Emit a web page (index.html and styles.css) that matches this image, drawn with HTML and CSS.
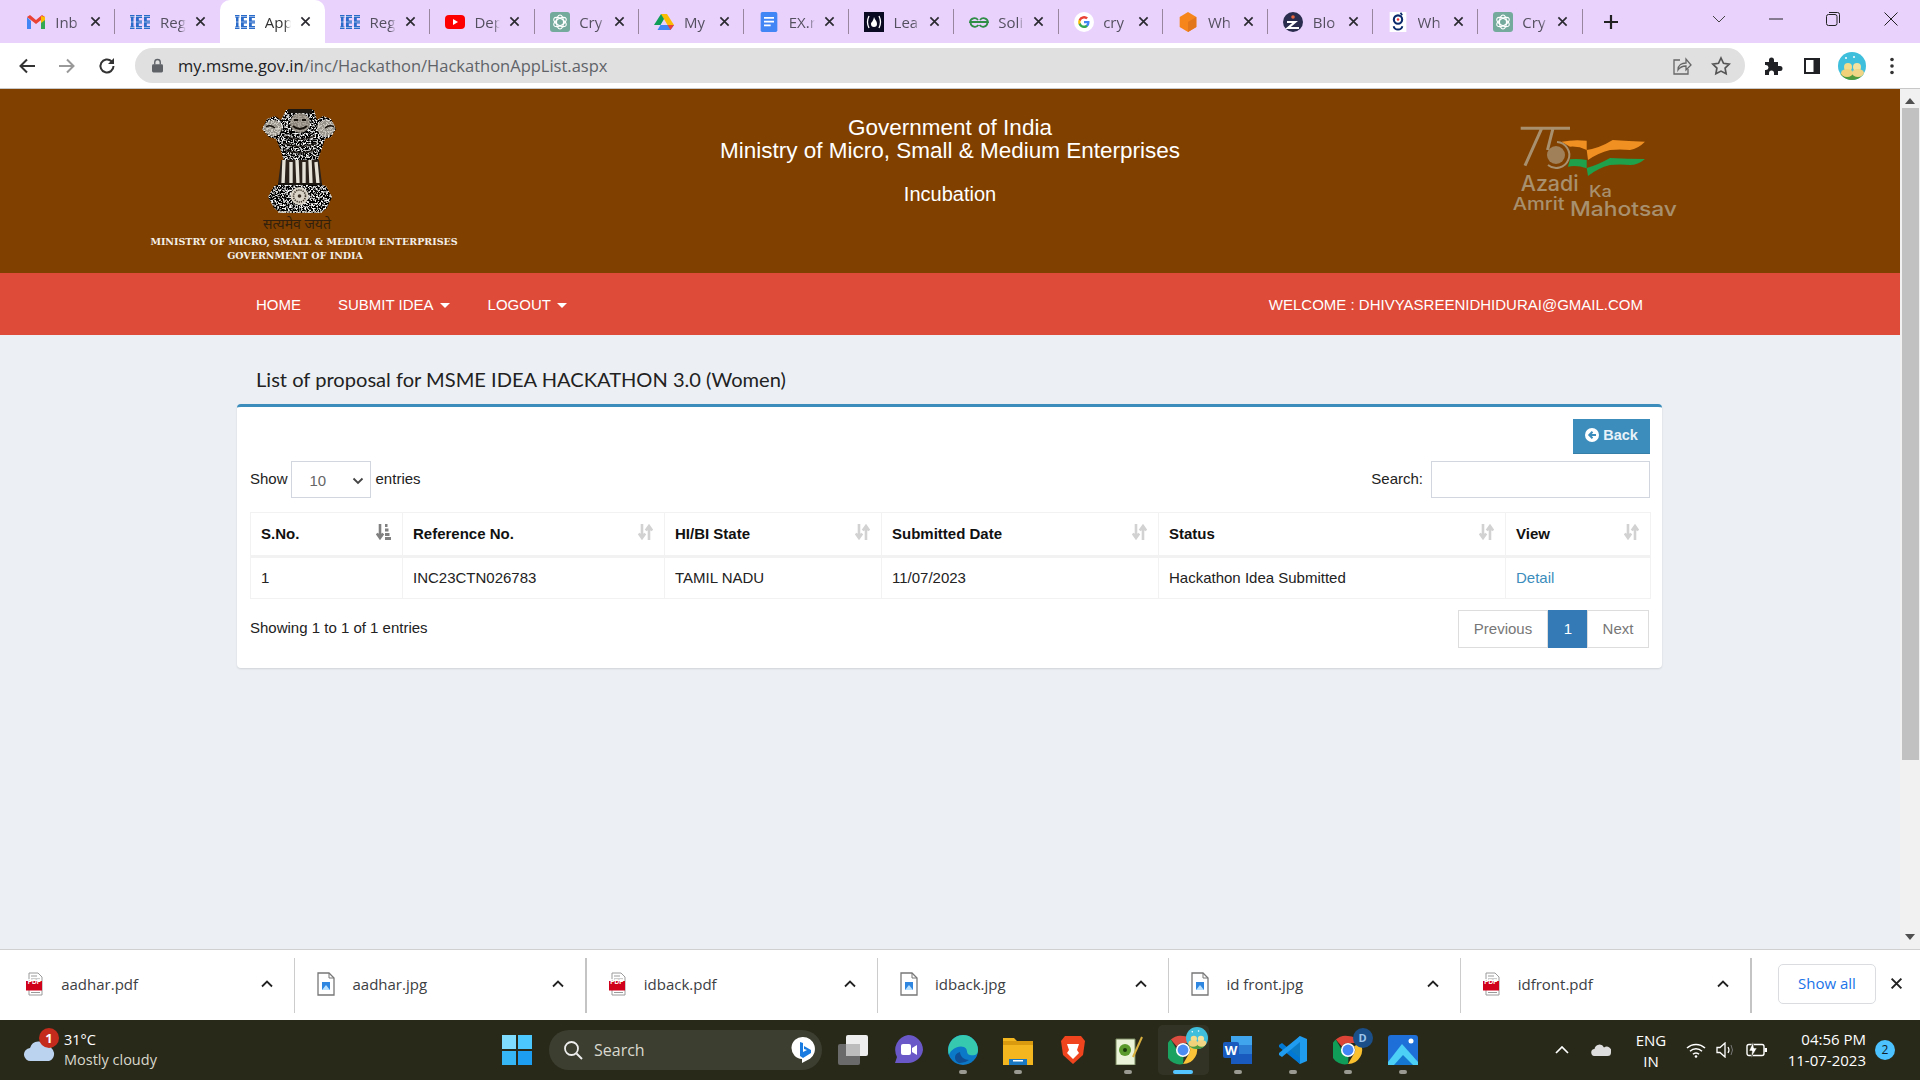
FILE: index.html
```html
<!DOCTYPE html>
<html lang="en">
<head>
<meta charset="utf-8">
<title>MSME Hackathon App List</title>
<link rel="stylesheet" href="styles.css">
</head>
<body>
<svg class="defs" aria-hidden="true">
  <defs>
    <filter id="spk" x="0" y="0" width="1" height="1">
      <feTurbulence type="fractalNoise" baseFrequency=".6" numOctaves="2" seed="7" result="n"/>
      <feColorMatrix in="n" type="matrix" values="5 0 0 0 -2.400 5 0 0 0 -2.400 5 0 0 0 -2.400 0 0 0 0 1" result="g"/>
      <feComposite in="g" in2="SourceAlpha" operator="in"/>
    </filter>
  </defs>
  <symbol id="gmail" viewBox="0 0 20 20"><path d="M1 5v12h4V9z" fill="#4285f4"/><path d="M19 5v12h-4V9z" fill="#34a853"/><path d="M1 5l9 7 9-7-3-2-6 5-6-5-3 2z" fill="#ea4335"/><path d="M15 4l4 1v3l-4 3z" fill="#fbbc04"/></symbol>
  <symbol id="msme" viewBox="0 0 20 20"><g fill="#2a6ac8"><path d="M0 3h4.500v2.500H3.500v9h1V17H0v-2.500h1v-9H0z"/><path d="M6 3h6v3H8.800v2.500H12v3H8.800V14H12v3H6z"/><path d="M14 3h6v3h-3.200v2.500H20v3h-3.200V14H20v3h-6z"/></g><path d="M0 4.500h20M0 10h20M0 15.500h20" stroke="#fff" stroke-width=".5"/></symbol>
  <symbol id="yt" viewBox="0 0 20 20"><rect y="3" width="20" height="14" rx="4" fill="#f00"/><path d="M8 7l5 3-5 3z" fill="#fff"/></symbol>
  <symbol id="gpt" viewBox="0 0 20 20"><rect width="20" height="20" rx="3" fill="#74aa9c"/><g fill="none" stroke="#fff" stroke-width="1.100"><ellipse cx="10" cy="10" rx="3.500" ry="7"/><ellipse cx="10" cy="10" rx="3.500" ry="7" transform="rotate(60 10 10)"/><ellipse cx="10" cy="10" rx="3.500" ry="7" transform="rotate(120 10 10)"/></g></symbol>
  <symbol id="drive" viewBox="0 0 20 20"><path d="M7 2h6l-6.500 11H0z" fill="#0f9d58"/><path d="M7 2h6l7 11h-6.500z" fill="#fbbc04"/><path d="M3.500 18h13L20 13H6.500z" fill="#4285f4"/><path d="M13.500 13H20l-3.500 5z" fill="#ea4335"/></symbol>
  <symbol id="docs" viewBox="0 0 20 24"><rect width="20" height="24" rx="2" fill="#4285f4"/><path d="M4 7h12M4 11.500h12M4 16h8" stroke="#fff" stroke-width="2"/></symbol>
  <symbol id="fcc" viewBox="0 0 20 20"><rect width="20" height="20" fill="#0a0a23"/><path d="M5 4Q2 10 5 16M15 4q3 6 0 12" fill="none" stroke="#fff" stroke-width="1.300"/><path d="M10 5c1 3 3 4 3 7a3 3 0 0 1-6 0c0-2 2-2 3-7z" fill="#fff"/></symbol>
  <symbol id="gfg" viewBox="0 0 20 20"><g fill="none" stroke="#2f8d46" stroke-width="1.800"><path d="M10 10H1a4.500 4.500 0 0 1 8-2M10 10h9a4.500 4.500 0 0 0-8-2"/><path d="M1.500 11a4.500 4.500 0 0 0 8 2M18.500 11a4.500 4.500 0 0 1-8 2"/></g></symbol>
  <symbol id="google" viewBox="0 0 20 20"><circle cx="10" cy="10" r="10" fill="#fff"/><path d="M15.500 10.200c0-.4 0-.8-.1-1.200H10v2.300h3.100a2.700 2.700 0 0 1-1.200 1.700v1.500h1.900c1.100-1 1.700-2.500 1.700-4.300z" fill="#4285f4"/><path d="M10 16c1.600 0 2.900-.5 3.800-1.500L11.900 13a3.500 3.500 0 0 1-5.300-1.900H4.700v1.500A6 6 0 0 0 10 16z" fill="#34a853"/><path d="M6.600 11.100a3.500 3.500 0 0 1 0-2.200V7.400H4.700a6 6 0 0 0 0 5.200z" fill="#fbbc04"/><path d="M10 6.400c.9 0 1.700.3 2.300.9l1.700-1.700A6 6 0 0 0 4.700 7.400l1.900 1.500A3.500 3.500 0 0 1 10 6.400z" fill="#ea4335"/></symbol>
  <symbol id="cube" viewBox="0 0 20 24"><path d="M10 0l10 6v12l-10 6L0 18V6z" fill="#f6851b"/><path d="M10 12l10-6v12l-10 6z" fill="#e2761b"/></symbol>
  <symbol id="bloc" viewBox="0 0 20 20"><circle cx="10" cy="10" r="10" fill="#2b2d4e"/><circle cx="10" cy="5" r="1.800" fill="#e8663d"/><path d="M4 10h8l-7 6h11" fill="none" stroke="#fff" stroke-width="2.200"/></symbol>
  <symbol id="gsq" viewBox="0 0 20 24"><rect width="20" height="24" fill="#fff"/><circle cx="10" cy="9" r="5" fill="none" stroke="#0b2a6b" stroke-width="2.500"/><circle cx="10" cy="9" r="1.500" fill="#e33"/><path d="M5 17a5 4 0 0 0 10 0" fill="none" stroke="#0b2a6b" stroke-width="2.500"/><path d="M13 1l2 3" stroke="#0b2a6b" stroke-width="2"/></symbol>
  <symbol id="x" viewBox="0 0 12 12"><path d="M1.500 1.500l9 9M10.500 1.500l-9 9" stroke="currentColor" stroke-width="1.800" fill="none"/></symbol>
  <symbol id="pdf" viewBox="0 0 18 24"><path d="M3 1h9l4 4v18H3z" fill="#fff" stroke="#9a9a9a"/><path d="M5 4h6M5 7h9M5 20.500h9" stroke="#9a9a9a"/><rect y="9" width="16" height="9.500" fill="#d0021b"/></symbol>
  <symbol id="jpg" viewBox="0 0 18 24"><path d="M1 1h11l5 5v17H1z" fill="#fff" stroke="#777" stroke-width="1.300"/><path d="M12 1v5h5" fill="none" stroke="#777"/><rect x="5" y="10" width="8" height="8" fill="#2f86e0"/><path d="M5 18l4-5 4 5z" fill="#b8e0ff"/></symbol>
  <symbol id="chev" viewBox="0 0 12 8"><path d="M1 6.500l5-5 5 5" fill="none" stroke="currentColor" stroke-width="1.800"/></symbol>
  <symbol id="sort" viewBox="0 0 15 16"><path d="M4 0v13M.8 9.500L4 14l3.200-4.500" fill="none" stroke="currentColor" stroke-width="2.600"/><path d="M11 16V3M7.800 6.500L11 2l3.200 4.500" fill="none" stroke="currentColor" stroke-width="2.600"/></symbol>
  <symbol id="sortd" viewBox="0 0 15 16"><path d="M4 0v13M.8 9.500L4 14l3.200-4.500" fill="none" stroke="currentColor" stroke-width="2.600"/><path d="M9 0h2.500v3H9zM9 4.500h3.500v3H9zM9 9h4.500v3H9zM9 13h6v3H9z" fill="currentColor"/></symbol>
  <symbol id="chrome" viewBox="0 0 32 32"><path d="M16 1a15 15 0 0 1 13 7.500H16a7.500 7.500 0 0 0-6.500 3.700L3 4.900A15 15 0 0 1 16 1z" fill="#db4437"/><path d="M29 8.500A15 15 0 0 1 16 31l6.500-11.200A7.500 7.500 0 0 0 22.500 12z" fill="#fbc02d"/><path d="M3 4.900l6.500 11.200a7.500 7.500 0 0 0 7 7.400L16 31A15 15 0 0 1 3 4.900z" fill="#0f9d58"/><circle cx="16" cy="16" r="7.500" fill="#fff"/><circle cx="16" cy="16" r="5.800" fill="#4285f4"/></symbol>
  <symbol id="chick" viewBox="0 0 28 28"><clipPath id="cc"><circle cx="14" cy="14" r="14"/></clipPath><g clip-path="url(#cc)"><rect width="28" height="28" fill="#3fbfdc"/><rect y="22" width="28" height="6" fill="#4f9a3c"/><circle cx="10" cy="15" r="4" fill="#f3dc8c"/><ellipse cx="9" cy="21" rx="6" ry="4" fill="#f1d27a"/><circle cx="19" cy="15" r="4" fill="#f3e2a0"/><ellipse cx="20" cy="21" rx="6" ry="4" fill="#efd585"/><circle cx="8" cy="6" r="1" fill="#fff"/><circle cx="16" cy="5" r="1" fill="#fff"/></g></symbol>
</svg>

<div class="tabstrip">
  <div class="tab"><svg class="fav"><use href="#gmail"/></svg><span class="tabt">Inb</span><svg class="tabx"><use href="#x"/></svg></div>
  <div class="tab tab-nosep"><svg class="fav"><use href="#msme"/></svg><span class="tabt">Reg</span><svg class="tabx"><use href="#x"/></svg></div>
  <div class="tab tab-active"><svg class="fav"><use href="#msme"/></svg><span class="tabt">App</span><svg class="tabx"><use href="#x"/></svg></div>
  <div class="tab"><svg class="fav"><use href="#msme"/></svg><span class="tabt">Reg</span><svg class="tabx"><use href="#x"/></svg></div>
  <div class="tab"><svg class="fav"><use href="#yt"/></svg><span class="tabt">Dep</span><svg class="tabx"><use href="#x"/></svg></div>
  <div class="tab"><svg class="fav"><use href="#gpt"/></svg><span class="tabt">Cry</span><svg class="tabx"><use href="#x"/></svg></div>
  <div class="tab"><svg class="fav"><use href="#drive"/></svg><span class="tabt">My</span><svg class="tabx"><use href="#x"/></svg></div>
  <div class="tab"><svg class="fav"><use href="#docs"/></svg><span class="tabt">EX.r</span><svg class="tabx"><use href="#x"/></svg></div>
  <div class="tab"><svg class="fav"><use href="#fcc"/></svg><span class="tabt">Lea</span><svg class="tabx"><use href="#x"/></svg></div>
  <div class="tab"><svg class="fav"><use href="#gfg"/></svg><span class="tabt">Soli</span><svg class="tabx"><use href="#x"/></svg></div>
  <div class="tab"><svg class="fav"><use href="#google"/></svg><span class="tabt">cry</span><svg class="tabx"><use href="#x"/></svg></div>
  <div class="tab"><svg class="fav"><use href="#cube"/></svg><span class="tabt">Wh</span><svg class="tabx"><use href="#x"/></svg></div>
  <div class="tab"><svg class="fav"><use href="#bloc"/></svg><span class="tabt">Blo</span><svg class="tabx"><use href="#x"/></svg></div>
  <div class="tab"><svg class="fav"><use href="#gsq"/></svg><span class="tabt">Wh</span><svg class="tabx"><use href="#x"/></svg></div>
  <div class="tab"><svg class="fav"><use href="#gpt"/></svg><span class="tabt">Cry</span><svg class="tabx"><use href="#x"/></svg></div>
  <svg class="newtab" viewBox="0 0 16 16"><path d="M8 1v14M1 8h14" stroke="#222" stroke-width="2.200"/></svg>
  <div class="winctl">
    <svg class="wbtn wdrop" viewBox="0 0 14 8"><path d="M1 1l6 6 6-6" fill="none" stroke="#444" stroke-width="1"/></svg>
    <svg class="wbtn wmin" viewBox="0 0 14 14"><path d="M0 7h14" stroke="#222" stroke-width="1"/></svg>
    <svg class="wbtn wmax" viewBox="0 0 14 14"><rect x=".5" y="2.500" width="10.500" height="11" rx="2" fill="none" stroke="#222"/><path d="M3 .5h8.500a2 2 0 0 1 2 2V11" fill="none" stroke="#222"/></svg>
    <svg class="wbtn wclose" viewBox="0 0 14 14"><path d="M.5.5l13 13M13.500.5l-13 13" stroke="#222" stroke-width="1"/></svg>
  </div>
</div>

<div class="toolbar">
  <svg class="navbtn" viewBox="0 0 18 18"><path d="M17 9H3M9 2.500L2.500 9 9 15.500" fill="none" stroke="#333" stroke-width="2"/></svg>
  <svg class="navbtn navbtn-off" viewBox="0 0 18 18"><path d="M1 9h14M9 2.500L15.500 9 9 15.500" fill="none" stroke="#999" stroke-width="2"/></svg>
  <svg class="navbtn" viewBox="0 0 18 18"><path d="M15.500 9a6.500 6.500 0 1 1-2-4.700" fill="none" stroke="#333" stroke-width="2"/><path d="M16 1v6h-6z" fill="#333"/></svg>
  <div class="omnibox">
    <svg class="lock" viewBox="0 0 12 16"><path d="M3 7V4.500a3 3 0 0 1 6 0V7" fill="none" stroke="#5f6368" stroke-width="1.500"/><rect y="6.500" width="12" height="9" rx="1.500" fill="#5f6368"/></svg>
    <span class="url"><span class="url-host">my.msme.gov.in</span>/inc/Hackathon/HackathonAppList.aspx</span>
    <svg class="omni-share" viewBox="0 0 20 20"><path d="M8 4H2v14h14v-5" fill="none" stroke="#666" stroke-width="1.300"/><path d="M6 14c0-5 4-7 8-7V3l5 6-5 5v-4c-3 0-6 1-8 4z" fill="none" stroke="#666" stroke-width="1.300"/></svg>
    <svg class="omni-star" viewBox="0 0 20 20"><path d="M10 2l2.500 5.300 5.700.8-4.100 4 1 5.700-5.100-2.700-5.100 2.700 1-5.700-4.100-4 5.700-.8z" fill="none" stroke="#555" stroke-width="1.700"/></svg>
  </div>
  <div class="tbright">
    <svg class="tbicon" viewBox="0 0 20 20"><path d="M2 6h4V4a2.500 2.500 0 0 1 5 0v2h4v4h2a2.500 2.500 0 0 1 0 5h-2v4h-4v-2a2.500 2.500 0 0 0-5 0v2H2v-5h1a2.500 2.500 0 0 0 0-5H2z" fill="#202124"/></svg>
    <svg class="tbicon" viewBox="0 0 20 20"><rect x="2" y="2" width="16" height="16" fill="#202124"/><rect x="4" y="4" width="7.500" height="12" fill="#fff"/></svg>
    <svg class="tbavatar"><use href="#chick"/></svg>
    <svg class="tbmenu" viewBox="0 0 4 18"><circle cx="2" cy="2.500" r="1.800" fill="#333"/><circle cx="2" cy="9" r="1.800" fill="#333"/><circle cx="2" cy="15.500" r="1.800" fill="#333"/></svg>
  </div>
</div>

<div class="viewport">
  <div class="page">
    <header class="masthead">
      <div class="mh-left">
        <svg class="emblem" viewBox="0 0 100 115">
          <g filter="url(#spk)" fill="#000">
            <path d="M36 10h28l3 10 6-4 8 3 5 10-5 8-6 2-4 12-5 14H35l-4-14-5-12-7-2-7-8 5-10 8-3 6 4z"/>
            <path d="M24 86q26-9 52 0l6 11-5 11-6 5H30l-6-5-6-11z"/>
          </g>
          <path d="M38 9h24v4H38z" fill="#1d1712"/>
          <ellipse cx="50" cy="23" rx="10" ry="10" fill="#a39c90" opacity=".85"/>
          <path d="M43 26q7 6 14 0" fill="none" stroke="#17110c" stroke-width="2"/>
          <path d="M44 20h4M52 20h4" stroke="#17110c" stroke-width="1.800"/>
          <ellipse cx="23" cy="28" rx="9" ry="8" fill="#c9c4b8" opacity=".75"/>
          <ellipse cx="76" cy="28" rx="9" ry="8" fill="#c9c4b8" opacity=".75"/>
          <path d="M16 27q4-3 9 1M84 27q-4-3-9 1" fill="none" stroke="#17110c" stroke-width="1.500"/>
          <path d="M35 36q15 7 30 0M33 43q17 7 34 0M35 50q15 6 30 0" fill="none" stroke="#1a140f" stroke-width="1.600" opacity=".8"/>
          <path d="M31 60h38l3 24H28z" fill="#2b221b"/>
          <path d="M34 60l-1 24M41 62l0 22M47 60l1 24M54 62l0 22M60 60l1 24M66 62l2 22" stroke="#e6e2d8" stroke-width="3.400"/>
          <path d="M28 84h44" stroke="#1d1712" stroke-width="2"/>
          <circle cx="49.500" cy="96" r="9" fill="#d8d3c6"/>
          <circle cx="49.500" cy="96" r="6" fill="none" stroke="#3a3027" stroke-width="1.600" stroke-dasharray="1.200 1"/>
          <circle cx="49.500" cy="96" r="1.800" fill="#3a3027"/>
          <path d="M28 112h44" stroke="#d8d2c4" stroke-width="1.500" stroke-dasharray="2 1"/>
        </svg>
        <div class="motto">सत्यमेव जयते</div>
        <div class="mh-name">MINISTRY OF MICRO, SMALL &amp; MEDIUM ENTERPRISES</div>
        <div class="mh-name mh-gov">GOVERNMENT OF INDIA</div>
      </div>
      <div class="mh-center">
        <div>Government of India</div>
        <div>Ministry of Micro, Small &amp; Medium Enterprises</div>
        <div class="mh-sub">Incubation</div>
      </div>
      <div class="mh-right">
        <svg class="azadi" viewBox="0 0 190 110">
          <path d="M20.700 8.300H70M41.700 8.300L25 45.700M53 8.300L47.500 30" fill="none" stroke="#a8906e" stroke-width="3"/>
          <path d="M57 22a13 13 0 1 1-9 23" fill="none" stroke="#a8906e" stroke-width="2"/>
          <circle cx="56" cy="35" r="9" fill="#a8906e" opacity=".8"/>
          <path d="M61.700 21.700q12-2.500 25-1V30q-8-4-16.700-3.300z" fill="#f08f22"/>
          <path d="M86.700 30q13-2 26-10 16 1 32.300 1.700-7 7-15 8.300-10-1-20 0-12 3-22 10z" fill="#f08f22"/>
          <path d="M70 39.300q8-1 16.700.7v8.300Q76 44.500 68 46.700z" fill="#1fa04a"/>
          <path d="M86.700 48q11-3 23.300-10 18 1 35 1-7 6-15 6-10-1-20 0-12 3-22 11z" fill="#1fa04a"/>
          <text class="az az-a" x="20.700" y="70.700" textLength="58" lengthAdjust="spacingAndGlyphs">Azadi</text>
          <text class="az az-k" x="89" y="76.700" textLength="23" lengthAdjust="spacingAndGlyphs">Ka</text>
          <text class="az az-m" x="12.700" y="90" textLength="52" lengthAdjust="spacingAndGlyphs">Amrit</text>
          <text class="az az-h" x="70" y="96" textLength="107" lengthAdjust="spacingAndGlyphs">Mahotsav</text>
        </svg>
      </div>
    </header>

    <nav class="mainnav">
      <a class="nav-link nav-home">HOME</a>
      <a class="nav-link nav-submit">SUBMIT IDEA<i class="caret"></i></a>
      <a class="nav-link">LOGOUT<i class="caret"></i></a>
      <span class="welcome">WELCOME : DHIVYASREENIDHIDURAI@GMAIL.COM</span>
    </nav>

    <h1 class="page-title">List of proposal for MSME IDEA HACKATHON 3.0 (Women)</h1>

    <section class="card">
      <div class="card-actions">
        <button class="btn-back"><svg class="back-ico" viewBox="0 0 14 14"><circle cx="7" cy="7" r="7" fill="#fff"/><path d="M11 7H5M7.500 3.800L4.300 7l3.200 3.200" fill="none" stroke="#3c8dbc" stroke-width="2"/></svg>Back</button>
      </div>
      <div class="dt-top">
        <div class="dt-len"><span class="lbl">Show</span><span class="selectbox">10<svg class="sel-chev" viewBox="0 0 12 8"><path d="M1.500 1.500L6 6l4.500-4.500" fill="none" stroke="#444" stroke-width="1.800"/></svg></span><span class="lbl">entries</span></div>
        <div class="dt-search"><span class="lbl">Search:</span><span class="searchbox"></span></div>
      </div>
      <table class="dt">
        <colgroup><col class="c1"><col class="c2"><col class="c3"><col class="c4"><col class="c5"><col class="c6"></colgroup>
        <thead>
          <tr>
            <th><div class="thi">S.No.<svg class="sorti sorti-on"><use href="#sortd"/></svg></div></th>
            <th><div class="thi">Reference No.<svg class="sorti"><use href="#sort"/></svg></div></th>
            <th><div class="thi">HI/BI State<svg class="sorti"><use href="#sort"/></svg></div></th>
            <th><div class="thi">Submitted Date<svg class="sorti"><use href="#sort"/></svg></div></th>
            <th><div class="thi">Status<svg class="sorti"><use href="#sort"/></svg></div></th>
            <th><div class="thi">View<svg class="sorti"><use href="#sort"/></svg></div></th>
          </tr>
        </thead>
        <tbody>
          <tr><td><span class="cellt">1</span></td><td><span class="cellt">INC23CTN026783</span></td><td><span class="cellt">TAMIL NADU</span></td><td><span class="cellt">11/07/2023</span></td><td><span class="cellt">Hackathon Idea Submitted</span></td><td><a class="detail cellt">Detail</a></td></tr>
        </tbody>
      </table>
      <div class="dt-bottom">
        <div class="dt-info">Showing 1 to 1 of 1 entries</div>
        <div class="pager"><a class="pg pg-prev">Previous</a><a class="pg pg-cur">1</a><a class="pg pg-next">Next</a></div>
      </div>
    </section>
  </div>
  <div class="scrollbar">
    <svg class="sb-arrow" viewBox="0 0 10 6"><path d="M5 0l5 6H0z" fill="#505050"/></svg>
    <div class="sb-thumb"></div>
    <svg class="sb-arrow" viewBox="0 0 10 6"><path d="M5 6L0 0h10z" fill="#505050"/></svg>
  </div>
</div>

<div class="downloads">
  <div class="dl"><svg class="dl-ico"><use href="#pdf"/></svg><span class="dl-tag">PDF</span><span class="dl-name">aadhar.pdf</span><svg class="dl-chev"><use href="#chev"/></svg></div>
  <div class="dl dl-thick"><svg class="dl-ico"><use href="#jpg"/></svg><span class="dl-name">aadhar.jpg</span><svg class="dl-chev"><use href="#chev"/></svg></div>
  <div class="dl"><svg class="dl-ico"><use href="#pdf"/></svg><span class="dl-tag">PDF</span><span class="dl-name">idback.pdf</span><svg class="dl-chev"><use href="#chev"/></svg></div>
  <div class="dl"><svg class="dl-ico"><use href="#jpg"/></svg><span class="dl-name">idback.jpg</span><svg class="dl-chev"><use href="#chev"/></svg></div>
  <div class="dl"><svg class="dl-ico"><use href="#jpg"/></svg><span class="dl-name">id front.jpg</span><svg class="dl-chev"><use href="#chev"/></svg></div>
  <div class="dl dl-thick"><svg class="dl-ico"><use href="#pdf"/></svg><span class="dl-tag">PDF</span><span class="dl-name">idfront.pdf</span><svg class="dl-chev"><use href="#chev"/></svg></div>
  <button class="showall">Show all</button>
  <svg class="dl-close"><use href="#x"/></svg>
</div>

<footer class="taskbar">
  <div class="weather">
    <svg class="w-ico" viewBox="0 0 32 36"><circle cx="22" cy="18" r="6" fill="#f0a030"/><path d="M7 34a6.500 6.500 0 0 1-1-13 9 9 0 0 1 17-1 6 7 0 0 1 2 14z" fill="#bcd3f0"/></svg>
    <span class="w-badge">1</span>
    <div class="w-text"><div class="w-temp">31°C</div><div class="w-cond">Mostly cloudy</div></div>
  </div>
  <div class="tb-app">
    <svg class="app" viewBox="0 0 30 30"><rect width="14" height="14" fill="#7fdcff"/><rect x="16" width="14" height="14" fill="#4cc8ff"/><rect y="16" width="14" height="14" fill="#37b6f6"/><rect x="16" y="16" width="14" height="14" fill="#1e9ef0"/></svg>
  </div>
  <div class="tb-search">
    <svg class="ts-ico" viewBox="0 0 20 20"><circle cx="8.500" cy="8.500" r="6.500" fill="none" stroke="#eee" stroke-width="1.800"/><path d="M13.500 13.500L19 19" stroke="#eee" stroke-width="2"/></svg>
    <span class="ts-text">Search</span>
    <svg class="ts-bing" viewBox="0 0 26 28"><path d="M13 1a12 12 0 0 1 7 21.700L12 27v-4A11 11 0 0 1 13 1z" fill="#fff"/><path d="M10 6l3 1v9l4-2-3-1 0-3 7 4v3l-8 5-3-2z" fill="#1a7ce0"/></svg>
  </div>
  <div class="tb-app"><svg class="app" viewBox="0 0 30 30"><rect y="9" width="22" height="21" rx="2" fill="#6a6a6a"/><rect x="8" width="22" height="21" rx="2" fill="#eee"/><rect x="8" y="9" width="14" height="12" fill="#bdbdbd"/></svg></div>
  <div class="tb-app"><svg class="app" viewBox="0 0 30 30"><path d="M15 0a15 15 0 0 1 15 15 15 15 0 0 1-15 13H2l2-6A15 15 0 0 1 15 0z" fill="#6a58c8"/><rect x="8" y="9" width="10" height="11" rx="2" fill="#fff"/><path d="M19 13l5-3v10l-5-3z" fill="#fff"/></svg></div>
  <div class="tb-app"><svg class="app" viewBox="0 0 30 30"><circle cx="15" cy="15" r="15" fill="#0c78c8"/><path d="M15 0a15 15 0 0 1 15 15c0 5-4 6-8 5-5-1-1-6-6-8-6-2-13 2-15 8A15 15 0 0 1 15 0z" fill="#36c9b0"/><path d="M12 17c0 5 5 8 9 8a15 15 0 0 1-10 3c-5-2-6-9 1-11z" fill="#0e4f95"/></svg><i class="dot"></i></div>
  <div class="tb-app"><svg class="app" viewBox="0 0 30 30"><path d="M0 3h11l3 3h16v24H0z" fill="#f3b61f"/><path d="M0 6h30v4H0z" fill="#d99a10"/><rect x="6" y="24" width="18" height="6" fill="#1a78c2"/><rect x="10" y="25" width="10" height="1.500" fill="#fff"/></svg><i class="dot"></i></div>
  <div class="tb-app"><svg class="app" viewBox="0 0 30 30"><path d="M7 1h16l4 5-2 14-10 9-10-9L3 6z" fill="#f0441f"/><path d="M9 9h12l-2 6 2 3-6 6-6-6 2-3z" fill="#fff"/></svg></div>
  <div class="tb-app"><svg class="app" viewBox="0 0 30 30"><path d="M3 4h19v26H3z" fill="#eaf3d8" stroke="#7a8a60"/><circle cx="12" cy="15" r="6" fill="#5a9a2c"/><circle cx="12" cy="15" r="2" fill="#1a3a0a"/><path d="M20 22L29 2" stroke="#d8b040" stroke-width="2"/></svg><i class="dot"></i></div>
  <div class="tb-app tb-app-on"><svg class="app"><use href="#chrome"/></svg><svg class="app-av"><use href="#chick"/></svg><i class="dot dot-on"></i></div>
  <div class="tb-app"><svg class="app" viewBox="0 0 30 30"><path d="M8 1h21v28H8z" fill="#2b7cd3"/><path d="M8 1h21v9H8z" fill="#41a5ee"/><path d="M8 19h21v10H8z" fill="#185abd"/><rect y="7" width="16" height="16" rx="2" fill="#185abd"/><text class="wordw" x="8" y="20">W</text></svg><i class="dot"></i></div>
  <div class="tb-app"><svg class="app" viewBox="0 0 30 30"><path d="M22 1l7 3v22l-7 3L8 16z" fill="#1f9cf0"/><path d="M22 1v28L10 17z" fill="#0065a9" opacity=".6"/><path d="M1 10l3-2 18 15v6L1 12z" fill="#0078d4"/><path d="M1 20l3 2 18-15V1L1 18z" fill="#1f9cf0"/></svg><i class="dot"></i></div>
  <div class="tb-app"><svg class="app"><use href="#chrome"/></svg><span class="app-d">D</span><i class="dot"></i></div>
  <div class="tb-app"><svg class="app" viewBox="0 0 30 30"><rect width="30" height="30" rx="3" fill="#1f6fd8"/><path d="M0 27L14 9l16 18v3H0z" fill="#4cd0f5"/><path d="M6 30l9-10 10 10z" fill="#1577d0"/><circle cx="23" cy="6" r="2.500" fill="#fff"/></svg><i class="dot"></i></div>
  <div class="tray">
    <svg class="t-chev" viewBox="0 0 14 8"><path d="M1 7l6-6 6 6" fill="none" stroke="#fff" stroke-width="1.700"/></svg>
    <svg class="t-od" viewBox="0 0 20 12"><path d="M4 12a3.500 3.500 0 0 1-.5-7 5 5 0 0 1 9.500-1.500A4.500 4.500 0 0 1 20 8.500 3.500 3.500 0 0 1 16.500 12z" fill="#ddd"/></svg>
    <div class="t-lang"><div>ENG</div><div>IN</div></div>
    <svg class="t-wifi" viewBox="0 0 20 16"><path d="M1 6a13 13 0 0 1 18 0M4 9.300a8.500 8.500 0 0 1 12 0M7 12.300a4 4 0 0 1 6 0" fill="none" stroke="#fff" stroke-width="1.500"/><circle cx="10" cy="14.500" r="1.300" fill="#fff"/></svg>
    <svg class="t-vol" viewBox="0 0 20 16"><path d="M1 5.500h3L9 1v14l-5-4.500H1z" fill="none" stroke="#fff" stroke-width="1.300"/><path d="M12 5q2 3 0 6" fill="none" stroke="#fff" stroke-width="1.200"/><path d="M15 3q3 5 0 10" fill="none" stroke="#777" stroke-width="1"/></svg>
    <svg class="t-bat" viewBox="0 0 22 16"><rect x="1" y="2.500" width="17" height="11" rx="2" fill="none" stroke="#fff" stroke-width="1.400"/><rect x="18.500" y="6" width="2.500" height="4" fill="#fff"/><path d="M7 0L3 9h3l-1 7 6-10H8z" fill="#fff" stroke="#2a2a1a" stroke-width=".6"/></svg>
    <div class="t-clock"><div>04:56 PM</div><div>11-07-2023</div></div>
    <span class="t-badge">2</span>
  </div>
</footer>
</body>
</html>
```

FILE: styles.css
```css
* { box-sizing: border-box; }
html, body { margin: 0; padding: 0; height: 100%; }
body { width: 1920px; height: 1080px; overflow: hidden; display: flex; flex-direction: column; font-family: "Liberation Sans", Arial, sans-serif; background: #fff; }
.defs { position: absolute; width: 0; height: 0; overflow: hidden; }

/* tab strip */
.tabstrip { height: 43px; flex: none; background: #e9d3fd; display: flex; padding-left: 10.7px; align-items: stretch; font-family: "Open Sans", sans-serif; }
.tab { width: 104.8px; flex: none; display: flex; align-items: center; padding-left: 15px; position: relative; }
.tab::after { content: ""; position: absolute; right: 0; top: 9px; height: 25px; width: 1px; background: #98869f; }
.tab-nosep::after, .tab-active::after { display: none; }
.tab-active { background: #fff; border-radius: 10px 10px 0 0; }
.fav { width: 20px; height: 20px; flex: none; }
.tabt { width: 26px; margin-left: 9.5px; font-size: 15px; color: #555060; white-space: nowrap; -webkit-mask-image: linear-gradient(90deg, #000 75%, transparent); mask-image: linear-gradient(90deg, #000 75%, transparent); }
.tab-active .tabt { color: #333; }
.tabx { width: 11px; height: 11px; margin-left: 9px; color: #2a2a30; flex: none; }
.newtab { width: 16px; height: 16px; margin: 13.500px 0 0 20px; }
.winctl { margin-left: auto; display: flex; align-items: flex-start; }
.wbtn { flex: none; display: block; }
.wdrop { width: 14px; height: 8px; margin: 15px 0 0 0; }
.wmin { width: 14px; height: 14px; margin: 12px 0 0 43px; }
.wmax { width: 14px; height: 14px; margin: 12px 0 0 43px; }
.wclose { width: 14px; height: 14px; margin: 12px 22px 0 44px; }

/* toolbar */
.toolbar { height: 46px; flex: none; background: #fff; border-bottom: 1px solid #c8c8c8; display: flex; align-items: center; padding: 0 0 0 18px; }
.navbtn { width: 18px; height: 18px; flex: none; margin-right: 22px; }
.omnibox { width: 1610px; height: 35px; margin-left: -3px; border-radius: 18px; background: #e0e0e0; display: flex; align-items: center; padding: 0 14px 0 17px; flex: none; }
.lock { width: 11px; height: 15px; flex: none; }
.url { margin-left: 15px; font-family: "Open Sans", sans-serif; font-size: 16.500px; color: #5f6368; white-space: nowrap; }
.url-host { color: #202124; }
.omni-share { width: 20px; height: 20px; margin-left: auto; }
.omni-star { width: 20px; height: 20px; margin-left: 19px; }
.tbright { display: flex; align-items: center; margin-left: 18px; }
.tbicon { width: 20px; height: 20px; margin-right: 19px; flex: none; }
.tbavatar { width: 28px; height: 28px; margin-left: -3px; flex: none; }
.tbmenu { width: 4px; height: 18px; margin-left: 24px; flex: none; }

/* page */
.viewport { height: 860px; flex: none; display: flex; background: #ecf0f5; overflow: hidden; }
.page { width: 1900px; flex: none; }
.scrollbar { width: 20px; flex: none; background: #f1f1f1; display: flex; flex-direction: column; align-items: center; padding-top: 9px; }
.sb-arrow { width: 10px; height: 6px; flex: none; }
.sb-thumb { width: 17px; height: 652px; background: #c1c1c1; margin: 4px 0 174px; flex: none; }

.masthead { height: 184px; background: #804000; display: grid; grid-template-columns: 1fr 1fr 1fr; color: #fff; }
.mh-left { padding: 11px 0 0 150px; }
.emblem { display: block; width: 100px; height: 115px; margin-left: 100px; }
.motto { width: 308px; padding-right: 14px; margin-top: 1px; text-align: center; font-family: "Noto Sans", "DejaVu Sans", sans-serif; font-size: 14px; line-height: 15px; color: #33200c; white-space: nowrap; }
.mh-name { width: 308px; text-align: center; font-family: "DejaVu Serif", serif; font-weight: 700; font-size: 9.500px; line-height: 14px; color: #f3efe8; white-space: nowrap; margin-top: 4px; }
.mh-gov { padding-right: 18px; margin-top: 0; }
.mh-center { text-align: center; font-size: 22.500px; line-height: 23px; padding-top: 27px; }
.mh-sub { margin-top: 21px; font-size: 20px; }
.mh-right { padding: 31px 0 0 233px; }
.azadi { display: block; width: 190px; height: 110px; }
.az { fill: #a8906e; font-family: "Inter", sans-serif; font-weight: 500; }
.az-a { font-size: 21px; }
.az-k { font-size: 16px; }
.az-m { font-size: 17px; }
.az-h { font-size: 20px; }

.mainnav { height: 62px; background: #de4b39; display: flex; align-items: center; padding: 0 257px 0 256px; color: #fff; font-size: 15px; }
.nav-home { margin-right: 37px; }
.nav-submit { margin-right: 38px; }
.caret { display: inline-block; width: 0; height: 0; margin-left: 6px; vertical-align: middle; border-top: 5px solid #fff; border-left: 5px solid transparent; border-right: 5px solid transparent; }
.welcome { margin-left: auto; }

.page-title { margin: 0; height: 69px; padding: 29px 0 0 256px; font-family: "Lato", sans-serif; font-weight: 400; font-size: 20.100px; line-height: 30px; color: #222; }
.card { width: 1425px; margin-left: 237px; height: 264px; background: #fff; border-top: 3px solid #3c8dbc; border-radius: 4px; box-shadow: 0 1px 2px rgba(0,0,0,.12); padding: 12px 12px 0 13px; font-size: 15px; color: #222; }
.card-actions { display: flex; justify-content: flex-end; height: 35px; }
.btn-back { width: 77px; height: 35px; padding: 0 0 2px; border: 0; border-bottom: 1px solid #367fa9; background: #3c8dbc; color: #e8f2f8; font: 700 14.500px "Liberation Sans", sans-serif; display: flex; align-items: center; justify-content: center; }
.back-ico { width: 14px; height: 14px; margin-right: 4px; }
.dt-top { display: flex; justify-content: space-between; align-items: center; margin-top: 7px; height: 37px; }
.dt-len, .dt-search { display: flex; align-items: center; }
.lbl { padding-bottom: 2px; }
.selectbox { width: 80px; height: 37px; margin: 0 5px 0 3px; border: 1px solid #d2d6de; display: flex; align-items: center; justify-content: space-between; padding: 2px 6px 0 18px; color: #666; }
.sel-chev { width: 12px; height: 8px; }
.searchbox { width: 219px; height: 37px; margin-left: 8px; border: 1px solid #d2d6de; }
.dt { width: 1400px; margin-top: 14px; border-collapse: collapse; table-layout: fixed; }
.c1 { width: 152px; } .c2 { width: 262px; } .c3 { width: 217px; } .c4 { width: 277px; } .c5 { width: 347px; } .c6 { width: 145px; }
.dt th, .dt td { border: 1px solid #f2f2f2; padding: 0 11px 0 10px; text-align: left; height: 42px; color: #222; }
.dt th { border-bottom-width: 3px; height: 44px; color: #111; }
.cellt { position: relative; top: -1px; }
.thi { display: flex; align-items: center; justify-content: space-between; padding-bottom: 1px; }
.sorti { width: 15px; height: 16px; color: #d2d2d2; flex: none; margin-top: -3px; }
.sorti-on { color: #808080; }
.dt .detail { color: #3c8dbc; }
.dt-bottom { display: flex; justify-content: space-between; margin-top: 11px; padding-right: 1px; }
.dt-info { margin-top: 9px; }
.pager { display: flex; height: 38px; }
.pg { display: flex; align-items: center; justify-content: center; border: 1px solid #ddd; color: #777; padding-bottom: 1px; }
.pg-prev { width: 90px; }
.pg-cur { width: 40px; background: #337ab7; border-color: #337ab7; color: #fff; }
.pg-next { width: 62px; margin-left: -1px; }

/* downloads */
.downloads { height: 71px; flex: none; background: #fff; border-top: 1px solid #d0d0d0; display: flex; align-items: center; padding-left: 4.200px; font-family: "Open Sans", sans-serif; color: #3c4043; }
.dl { width: 291.3px; height: 55px; flex: none; display: flex; align-items: center; padding: 0 21px 2px 22px; border-right: 1px solid #ccc; position: relative; }
.dl-thick { border-right: 2px solid #c4c4c4; }
.dl-ico { width: 18px; height: 24px; flex: none; }
.dl-tag { position: absolute; left: 22.500px; top: 20px; width: 15px; font: 700 6.500px "Liberation Sans", sans-serif; color: #fff; text-align: center; }
.dl-name { margin-left: 17px; font-size: 15px; flex: 1; white-space: nowrap; }
.dl-chev { width: 12px; height: 8px; flex: none; color: #222; }
.showall { width: 98px; height: 40px; margin: 0 0 3px 26px; background: #fff; border: 1px solid #dadce0; border-radius: 5px; color: #1a73e8; font: 15px "Open Sans", sans-serif; padding: 0 0 2px; }
.dl-close { width: 13px; height: 13px; margin: 0 0 3px 14px; color: #222; }

/* taskbar */
.taskbar { height: 60px; flex: none; background: #29291a; display: flex; font-family: "Open Sans", sans-serif; color: #eee; position: relative; }
.weather { width: 489px; flex: none; position: relative; display: flex; padding-left: 24px; }
.w-ico { width: 32px; height: 36px; margin-top: 7px; flex: none; }
.w-badge { position: absolute; left: 39px; top: 8px; width: 20px; height: 20px; border-radius: 50%; background: #c42b1c; color: #fff; font: 700 13px/20px "Open Sans", sans-serif; text-align: center; }
.w-text { margin-left: 8px; font-size: 14.500px; line-height: 20px; padding-top: 10px; white-space: nowrap; }
.w-temp { color: #fff; }
.w-cond { color: #d8d8cc; }
.tb-app { width: 55px; flex: none; display: flex; flex-direction: column; align-items: center; padding-top: 15px; position: relative; }
.app { width: 30px; height: 30px; flex: none; display: block; }
.dot { display: block; width: 8px; height: 4px; margin-top: 5px; border-radius: 2px; background: #9a9a92; }
.dot-on { width: 20px; background: #4cc2ff; }
.tb-app-on::before { content: ""; position: absolute; left: 2px; right: 2px; top: 5px; bottom: 5px; background: rgba(255,255,255,.05); border-radius: 5px; }
.app-av { position: absolute; left: 30px; top: 6px; width: 22px; height: 24px; }
.app-d { position: absolute; left: 32px; top: 8px; width: 20px; height: 20px; border-radius: 50%; background: #1a4f8a; color: #9ec7ee; font: 700 11px/20px "Open Sans", sans-serif; text-align: center; }
.wordw { fill: #fff; font: 700 13px "Open Sans", sans-serif; text-anchor: middle; }
.tb-search { width: 273px; height: 40px; margin: 10px 3.500px 0 5px; flex: none; border-radius: 20px; background: #3c3e2f; display: flex; align-items: center; padding: 0 6px 0 14px; }
.ts-ico { width: 20px; height: 20px; flex: none; }
.ts-text { margin-left: 11px; font-size: 16px; color: #d9d9cf; }
.ts-bing { width: 26px; height: 28px; margin-left: auto; }
.tray { margin-left: auto; display: flex; align-items: center; padding-right: 25px; }
.t-chev { width: 14px; height: 8px; flex: none; }
.t-od { width: 20px; height: 12px; margin-left: 22px; flex: none; }
.t-lang { width: 40px; margin-left: 20px; text-align: center; font-size: 15px; line-height: 21px; color: #fff; padding-top: 2px; }
.t-wifi { width: 20px; height: 16px; margin-left: 15px; flex: none; }
.t-vol { width: 20px; height: 16px; margin-left: 10px; flex: none; }
.t-bat { width: 22px; height: 16px; margin-left: 10px; flex: none; }
.t-clock { width: 98px; text-align: right; font-size: 15px; line-height: 21px; color: #fff; white-space: nowrap; }
.t-badge { width: 20px; height: 20px; margin-left: 9px; border-radius: 50%; background: #4cc2ff; color: #10202a; font-size: 12px; line-height: 20px; text-align: center; margin-top: -1px; }
```
